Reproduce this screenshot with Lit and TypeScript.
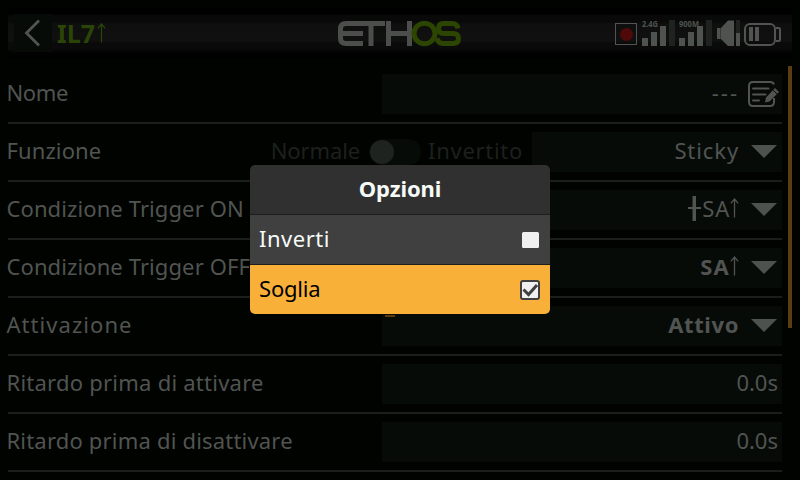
import { LitElement, html, css, svg, nothing } from "lit";
import { customElement } from "lit/decorators.js";
import { styleMap } from "lit/directives/style-map.js";

type Row = {
  label: string;
  ls: number;
  value: string;
  vls: number;
  bold?: boolean;
  kind: "edit" | "choice" | "number";
  toggle?: boolean;
  mark?: boolean;
  midpos?: boolean;
  arrow?: boolean;
};

const ROWS: Row[] = [
  { label: "Nome", ls: -0.4, value: "---", vls: 2, kind: "edit" },
  { label: "Funzione", ls: 0.1, value: "Sticky", vls: 0.9, kind: "choice", toggle: true },
  { label: "Condizione Trigger ON", ls: 0.1, value: "SA", vls: 0.8, kind: "choice", midpos: true, arrow: true },
  { label: "Condizione Trigger OFF", ls: 0.1, value: "SA", vls: 1.2, kind: "choice", bold: true, arrow: true },
  { label: "Attivazione", ls: 1.05, value: "Attivo", vls: 0.6, kind: "choice", bold: true, mark: true },
  { label: "Ritardo prima di attivare", ls: 0.24, value: "0.0s", vls: 0, kind: "number" },
  { label: "Ritardo prima di disattivare", ls: 0.19, value: "0.0s", vls: 0, kind: "number" },
];

const spacing = (n: number) => styleMap({ letterSpacing: n + "px" });

const upArrow = html`<svg class="up" width="9" height="20" viewBox="0 0 9 20">
  <path d="M4.5 1V19.5M0.8 5.4L4.5 1L8.2 5.4" fill="none" stroke="currentColor" stroke-width="1.3" />
</svg>`;

@customElement("app-root")
export class AppRoot extends LitElement {
  static styles = css`
    :host {
      display: block;
      position: relative;
      width: 800px;
      height: 480px;
      overflow: hidden;
      background: #000300;
      color: #515451;
      font: 22px/30px "Noto Sans", sans-serif;
    }
    svg { display: block; flex: none; }
    .bar {
      box-sizing: border-box;
      height: 50px;
      margin: 8px 8px 0;
      padding: 6px 10px 6px 6px;
      display: flex;
      align-items: center;
      background: linear-gradient(#000 0 6px, #080908 8px 14px, #0e0f0e 16px 24px, #0f100f 24px 33px, #090a09 35px 41px, #020302 44px, #000 50px);
    }
    .back { width: 38px; height: 38px; background: #060b08; }
    .title { display: flex; align-items: center; gap: 2px; margin-left: 5px; color: #2b4507; font-weight: 700; font-size: 25px; }
    .title .up { height: 22px; margin-bottom: 1px; }
    .logo { position: absolute; left: 337px; top: 21px; }
    .status { margin-left: auto; }
    .list { margin: 8px 18px 0 8px; }
    .row {
      box-sizing: border-box;
      height: 58px;
      border-bottom: 2px solid #1b1f1c;
      display: flex;
      align-items: center;
      justify-content: space-between;
      white-space: nowrap;
    }
    .label { margin-left: -1.5px; padding-bottom: 4px; flex: 1 1 0; min-width: 0; }
    .ctl { display: flex; align-items: center; flex: none; min-width: 400px; height: 40px; justify-content: flex-end; }
    .dim { color: #1d201d; padding-bottom: 4px; }
    .switch { flex: none; width: 52px; height: 26px; margin: 0 7px 0 9px; border-radius: 13px; background: #060b08; padding: 1px; box-sizing: border-box; }
    .knob { width: 24px; height: 24px; border-radius: 50%; background: #1f2320; }
    .field {
      position: relative;
      box-sizing: border-box;
      flex: 1;
      height: 40px;
      padding-right: 5px;
      display: flex;
      align-items: center;
      justify-content: flex-end;
      background: #060b08;
    }
    .field.short { flex: none; width: 250px; margin-left: 9px; }
    .value { display: flex; align-items: center; padding-bottom: 4px; }
    .value.num { margin-right: -1px; }
    .value .up { margin-left: 0; }
    .bold { font-weight: 700; }
    .tri { margin: 0 0 1px 12px; }
    .pencil { margin: 0 -2px 1px 8px; }
    .mark { position: absolute; left: 3px; top: 9px; width: 10px; height: 2px; background: #593a0d; }
    .scroll { position: absolute; left: 788px; top: 66px; width: 4px; height: 262px; background: #5c3c12; }
    .dialog {
      position: absolute;
      left: 250px;
      top: 165px;
      width: 300px;
      height: 149px;
      border-radius: 5px;
      overflow: hidden;
      color: #f7fbf7;
    }
    .head { height: 49px; line-height: 46px; letter-spacing: -0.1px; text-align: center; font-weight: 700; background: #303030; border-bottom: 1px solid #1c1c1c; }
    .opt { box-sizing: border-box; height: 50px; padding: 0 10px 0 9px; display: flex; align-items: center; justify-content: space-between; background: #404040; border-bottom: 1px solid #202020; }
    .opt span { padding-bottom: 3px; }
    .opt.sel { height: 49px; background: #f8b038; color: #000; border: 0; }
    .sig { font: 700 8.5px "Noto Sans", sans-serif; }
  `;

  icon(r: Row) {
    if (r.kind === "choice")
      return html`<svg class="tri" width="26" height="13" viewBox="0 0 26 13"><path d="M0 0H26L13 13Z" fill="#4e524f" /></svg>`;
    if (r.kind === "edit")
      return html`<svg class="pencil" width="32" height="28" viewBox="0 0 32 28" fill="none" stroke="#515451" stroke-width="2">
        <path d="M27 4.5C26.4 2.4 25 2 23 2H6C3 2 2 3 2 6V22C2 25 3 26 6 26H23C26 26 27 25 27 22V18" />
        <path d="M6 8.5H21.5M6 14.5H18.5M6 20.5H12" stroke-linecap="round" />
        <path d="M18 22.5L19 17.5L28 8L32 12L22.5 21.5Z" fill="#515451" stroke="none" />
        <path d="M25.5 9.5L30 14" stroke="#060b08" stroke-width="1" />
      </svg>`;
    return nothing;
  }

  row(r: Row) {
    return html`<div class="row">
      <span class="label" style=${spacing(r.ls)}>${r.label}</span>
      <div class="ctl">
        ${r.toggle
          ? html`<span class="dim" style=${spacing(-0.1)}>Normale</span>
              <div class="switch"><div class="knob"></div></div>
              <span class="dim" style=${spacing(0.7)}>Invertito</span>`
          : nothing}
        <div class="field ${r.toggle ? "short" : ""}">
          ${r.mark ? html`<i class="mark"></i>` : nothing}
          <span class="value ${r.bold ? "bold" : ""} ${r.kind === "number" ? "num" : ""}">
            ${r.midpos
              ? html`<svg width="14" height="26" viewBox="0 0 14 26"><path d="M4.500 1H8V12H13V14H8V26H4.500V14H0V12H4.500Z" fill="currentColor" /></svg>`
              : nothing}
            <span style=${spacing(r.vls)}>${r.value}</span>${r.arrow ? upArrow : nothing}
          </span>
          ${this.icon(r)}
        </div>
      </div>
    </div>`;
  }

  status() {
    const bars = (x: number) => svg`<g fill="#4f534f">
      <path d="M${x} 26h6v8h-6zM${x + 9} 20h6v14h-6zM${x + 18} 14h6v20h-6z" />
      <path d="M${x + 27} 8h6v26h-6z" fill="#1f231f" /></g>`;
    return html`<svg class="status" width="167" height="38" viewBox="0 2 167 38" fill="none">
      <rect x="0.5" y="11.5" width="21" height="21" stroke="#515451" />
      <circle cx="11.5" cy="22.5" r="6.5" fill="#500909" />
      ${bars(27)}${bars(64)}
      <text class="sig" x="27" y="14.500" fill="#4f534f" textLength="16" lengthAdjust="spacingAndGlyphs">2.4G</text>
      <text class="sig" x="64" y="14.500" fill="#4f534f" textLength="20" lengthAdjust="spacingAndGlyphs">900M</text>
      <path d="M102 16H106L113 8.500H119V34H113L106 27H102Z" fill="#4f534f" />
      <path d="M105.500 16V27" stroke="#2c2f2c" stroke-width="0.7" />
      <path d="M121 8h4v13h-4z" fill="#1f231f" /><path d="M121 21h4v13h-4z" fill="#4f534f" />
      <rect x="130" y="12" width="30" height="21" rx="5" stroke="#515451" stroke-width="2" />
      <path d="M161 16H163.5Q165 16 165 17.5V27.5Q165 29 163.5 29H161" stroke="#515451" stroke-width="2" />
      <path d="M134 15h4v14h-4zM140 15h4v14h-4z" fill="#515451" />
    </svg>`;
  }

  render() {
    return html`
      <header class="bar">
        <svg class="back" viewBox="0 0 38 38"><path d="M25 6.500L12.500 19L25 31.500" fill="none" stroke="#515451" stroke-width="2.8" /></svg>
        <span class="title"><span style=${spacing(0)}>IL7</span>${upArrow}</span>
        <svg class="logo" width="125" height="26" viewBox="-1 0 125 26" fill="none" stroke="#4c4e4c" stroke-width="5">
          <path d="M25 2.500H8Q2.500 2.500 2.500 8V17Q2.500 22.500 8 22.500H25M2.500 12.500H25M23 2.500H47M33 2.500V25M50.500 0V25M71.500 0V25M51 12.500H71" />
          <ellipse cx="86.500" cy="12.500" rx="10.500" ry="10.200" stroke="#2c4500" />
          <path d="M120 7.500Q119 2.500 114 2.500H105.500Q100.500 2.500 100.500 7.500T105.500 12.500H115Q120.500 12.500 120.500 17.500T115 22.500H105Q100 22.500 99 17" stroke="#2c4500" />
        </svg>
        ${this.status()}
      </header>
      <main class="list">${ROWS.map((r) => this.row(r))}</main>
      <div class="scroll"></div>
      <section class="dialog">
        <div class="head">Opzioni</div>
        <div class="opt">
          <span style=${spacing(0.5)}>Inverti</span>
          <svg width="20" height="20"><rect x="2" y="2" width="17" height="16" rx="1.5" fill="#f0f0f0" /></svg>
        </div>
        <div class="opt sel">
          <span style=${spacing(-0.2)}>Soglia</span>
          <svg width="20" height="20" fill="none">
            <rect x="1" y="1" width="18" height="18" rx="2" fill="#f0f0f0" stroke="#404040" stroke-width="2" />
            <path d="M3.500 9.500L8.500 14.500L17 5" stroke="#404040" stroke-width="3" />
          </svg>
        </div>
      </section>
    `;
  }
}
